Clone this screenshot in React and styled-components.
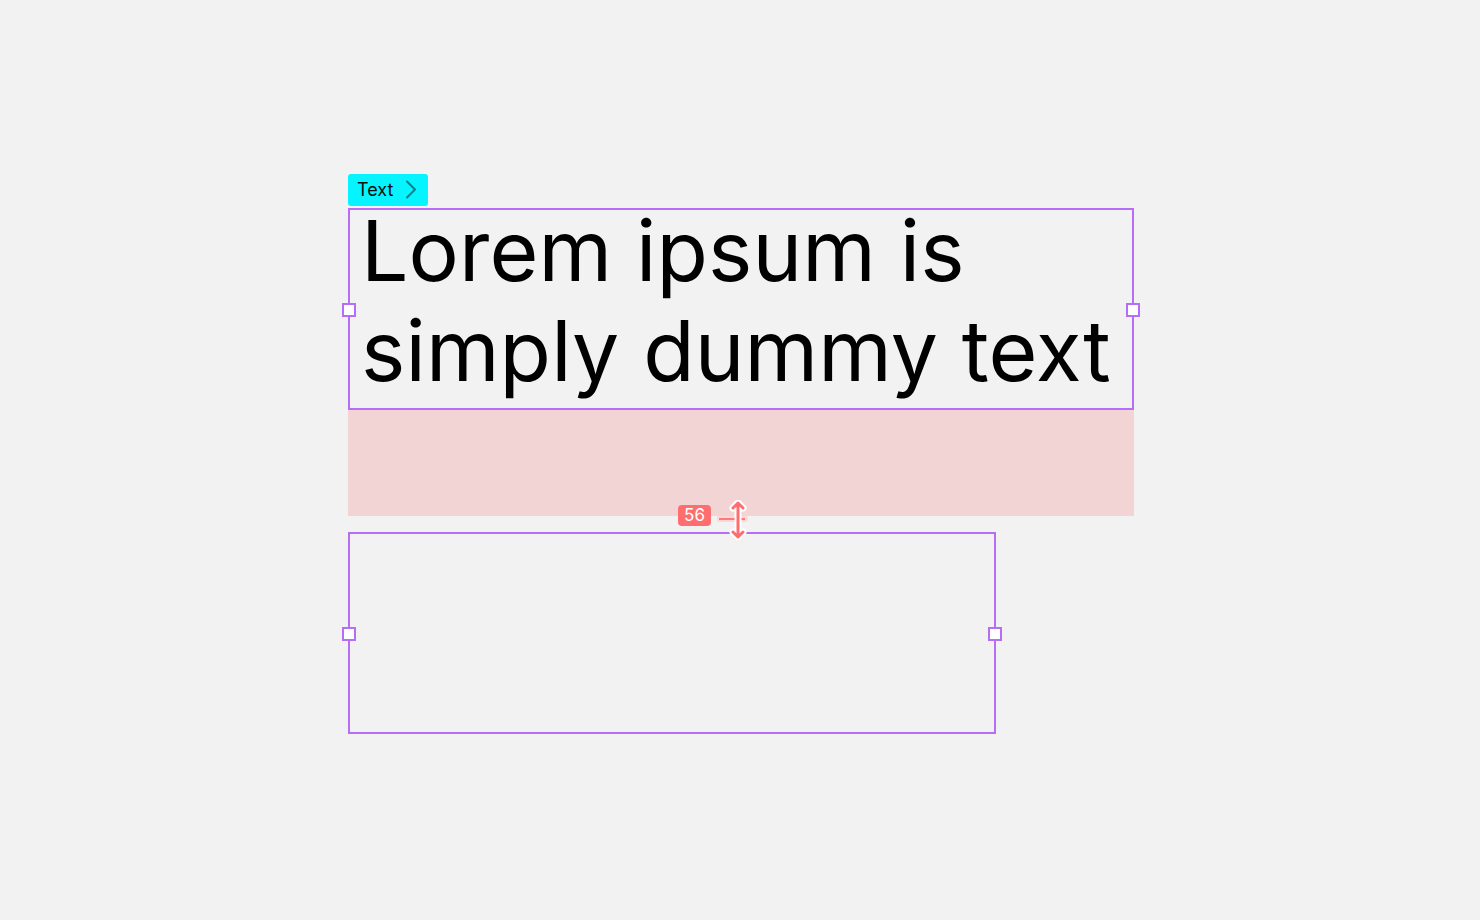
import React from "react";
import styled, { createGlobalStyle } from "styled-components";

const GlobalStyle = createGlobalStyle`
  html, body {
    margin: 0;
    padding: 0;
    background: #f2f2f2;
  }
  body {
    font-family: Inter, "Noto Sans", sans-serif;
  }
`;

const purple = "#b66ef8";

const Canvas = styled.div`
  width: 1480px;
  height: 920px;
  background: #f2f2f2;
  padding: 174px 0 0 348px;
  box-sizing: border-box;
`;

const Stack = styled.div`
  position: relative;
  display: flex;
  flex-direction: column;
  align-items: flex-start;
  width: 786px;
`;

const LayerTag = styled.div`
  display: flex;
  align-items: center;
  gap: 12px;
  height: 32px;
  padding: 0 0 1px 9px;
  box-sizing: border-box;
  width: 80px;
  background: #05f4ff;
  border-radius: 3px;
  color: #0c0c0c;
  font-size: 18px;
  margin-bottom: 2px;
`;

const Frame = styled.div`
  position: relative;
  width: ${(p) => p.$w}px;
  height: 202px;
  border: 2px solid ${purple};
  box-sizing: border-box;
`;

const Handle = styled.span`
  position: absolute;
  top: 50%;
  ${(p) => (p.$side === "left" ? "left: -8px;" : "right: -8px;")}
  width: 14px;
  height: 14px;
  margin-top: -6px;
  box-sizing: border-box;
  background: #ffffff;
  border: 2px solid ${purple};
`;

const Headline = styled.div`
  margin: -9px 0 0 11px;
  font-size: 84px;
  line-height: 100px;
  letter-spacing: 0.12px;
  color: #000;
  white-space: nowrap;
`;

const Spacing = styled.div`
  width: 786px;
  height: 106px;
  background: #f3d4d4;
  margin-bottom: 16px;
`;

const Measure = styled.div`
  position: absolute;
  left: 330px;
  top: 326px;
  display: flex;
  align-items: flex-start;
`;

const Badge = styled.div`
  height: 21px;
  min-width: 33px;
  margin-top: 5px;
  padding: 0 5px;
  box-sizing: border-box;
  background: #ff6e6e;
  color: #fff;
  border-radius: 4px;
  font-size: 17px;
  line-height: 21px;
  text-align: center;
`;

const ArrowMark = styled.svg`
  display: block;
  margin-left: 6px;
`;

const Chevron = () => (
  <svg width="12" height="19" viewBox="0 0 12 19">
    <path d="M2 1.5 L10 9.5 L2 17.5" fill="none" stroke="#0b7f86" strokeWidth="2" strokeLinecap="round" strokeLinejoin="round" />
  </svg>
);

const arrowPath = "M21 3 L21 37 M16 8 L21 3 L26 8 M16 32 L21 37 L26 32";

export default function App() {
  return (
    <>
      <GlobalStyle />
      <Canvas>
        <Stack>
          <LayerTag>
            <span>Text</span>
            <Chevron />
          </LayerTag>
          <Frame $w={786}>
            <Handle $side="left" />
            <Handle $side="right" />
            <Headline>
              Lorem ipsum is
              <br />
              simply dummy text
            </Headline>
          </Frame>
          <Spacing />
          <Frame $w={648}>
            <Handle $side="left" />
            <Handle $side="right" />
          </Frame>
          <Measure>
            <Badge>56</Badge>
            <ArrowMark width="36" height="40" viewBox="0 0 36 40">
              <line x1="2" y1="19" x2="28" y2="19" stroke="#ffd6d6" strokeWidth="6" strokeLinecap="round" />
              <line x1="2" y1="19" x2="28" y2="19" stroke="#ff7a7a" strokeWidth="2" />
              <path d={arrowPath} fill="none" stroke="#ffffff" strokeWidth="7" strokeLinecap="round" strokeLinejoin="round" />
              <path d={arrowPath} fill="none" stroke="#ff6e6e" strokeWidth="3" strokeLinecap="round" strokeLinejoin="round" />
            </ArrowMark>
          </Measure>
        </Stack>
      </Canvas>
    </>
  );
}
